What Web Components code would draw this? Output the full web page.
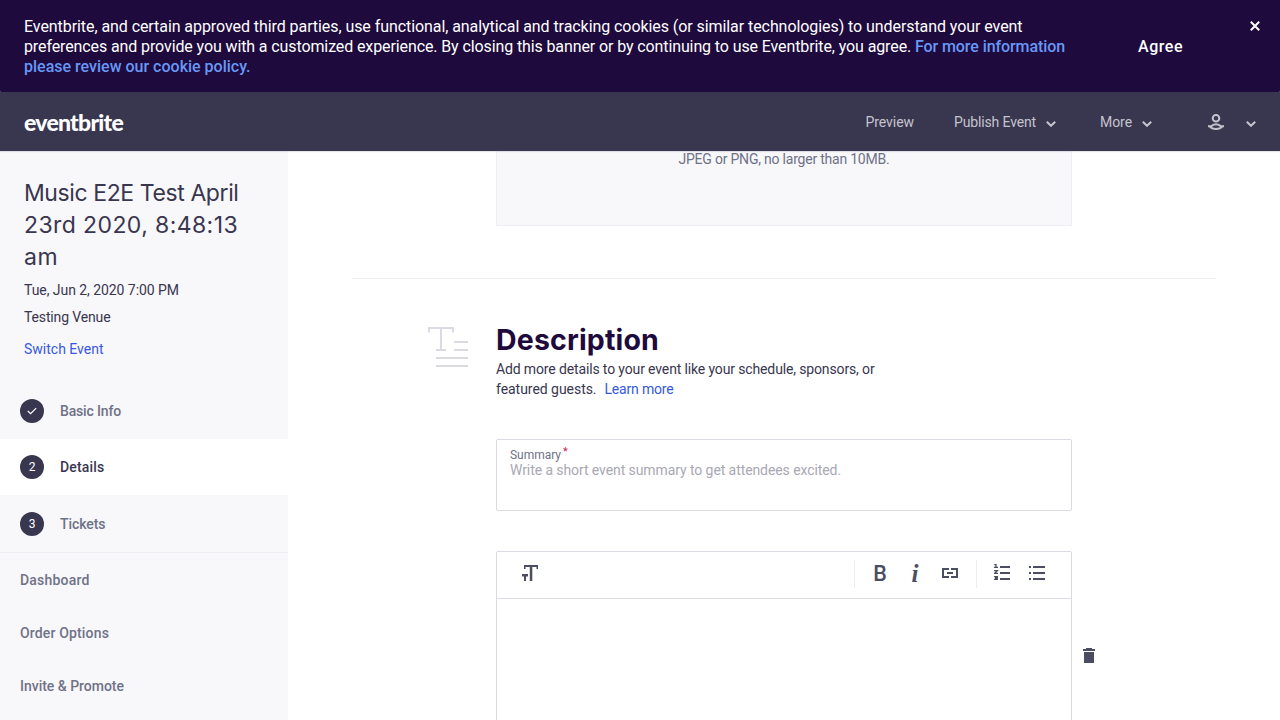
<!DOCTYPE html>
<html lang="en"><head><meta charset="utf-8"><title>Music E2E Test April – Details</title>
<style>
body{margin:0;font-family:Roboto,"Liberation Sans",sans-serif;font-size:14px;color:#39364f;background:#fff}
</style></head><body>
<event-page></event-page>
<script>
const make = (name, html) => customElements.define(name, class extends HTMLElement {
  connectedCallback() {
    if (this.shadowRoot) return;
    const t = document.createElement('template');
    t.innerHTML = html;
    this.attachShadow({mode: 'open'}).append(t.content.cloneNode(true));
  }
});

make('chevron-icon', `<style>:host{display:block;width:10px;height:6px}svg{display:block}</style>
<svg width="10" height="6" viewBox="0 0 10 6" fill="none" stroke="currentColor" stroke-width="2"><path d="M.8.8 5 4.8 9.2.8"/></svg>`);

make('cookie-banner', `<style>
:host{display:flex;box-sizing:border-box;height:92px;padding:17px 20px 0 24px;background:#1e0a3c;color:#fff;font-size:16px;line-height:20px;border-radius:0 0 1px 1px}
.copy{width:1046px}.row{display:block;height:20px;white-space:nowrap}
b{font-weight:500;color:#6898f7}
.agree{margin:20px 0 0 68px;font-weight:500;width:112px}
svg{display:block;margin-top:4px}
</style>
<div class="copy">
<span class="row"><fit-text w="998.5">Eventbrite, and certain approved third parties, use functional, analytical and tracking cookies (or similar technologies) to understand your event</fit-text></span>
<span class="row"><fit-text w="891">preferences and provide you with a customized experience. By closing this banner or by continuing to use Eventbrite, you agree. </fit-text><b><fit-text w="150">For more information</fit-text></b></span>
<span class="row"><b><fit-text w="226.5">please review our cookie policy.</fit-text></b></span>
</div>
<span class="agree"><fit-text w="45">Agree</fit-text></span>
<svg width="10" height="10" viewBox="0 0 10 10" stroke="#fff" stroke-width="2"><path d="M.8.8l8.4 8.4M9.2.8.8 9.2"/></svg>`);

make('top-nav', `<style>
:host{display:flex;align-items:center;height:59px;box-sizing:border-box;padding:0 24px;background:#39364f;color:#c5c4ce;line-height:20px;position:relative;z-index:1;box-shadow:0 1px 1px #39364f22}
.logo{font:900 23px/26px Lato,sans-serif;color:#fff;width:841.5px;margin-top:0}
chevron-icon{margin-top:4px}
.publish{margin:0 10px 0 40px}.more{margin:0 10px 0 44px}.user{margin:0 22px 0 56px}
</style>
<div class="logo"><fit-text w="99">eventbrite</fit-text></div>
<fit-text w="48.5">Preview</fit-text>
<fit-text class="publish" w="82">Publish Event</fit-text><chevron-icon></chevron-icon>
<fit-text class="more" w="32">More</fit-text><chevron-icon></chevron-icon>
<svg class="user" width="16" height="16" viewBox="0 0 16 16" fill="none" stroke="currentColor" stroke-width="2"><circle cx="8" cy="4.300" r="3.300"/><path d="M0 12.200h3.200M12.800 12.200H16M1.600 12.400C3 14 5 15 8 15s5-1 6.400-2.600M3 12.400C4.200 11 6 10.200 8 10.200s3.800.8 5 2.200"/></svg>
<chevron-icon></chevron-icon>`);

make('step-item', `<style>
:host{display:flex;align-items:center;height:56px;padding-left:20px;color:#6f7287;font-weight:500}
:host([active]){background:#fff;color:#39364f}
.dot{width:24px;height:24px;border-radius:50%;background:#39364f;color:#fff;font-size:12px;font-weight:400;display:flex;align-items:center;justify-content:center;margin-right:16px}
</style><span class="dot"><slot name="mark"></slot></span><slot></slot>`);

make('side-bar', `<style>
:host{display:block;width:288px;height:569px;background:#f8f7fa;overflow:hidden;flex:none}
header{padding:26px 24px 0;height:206px}
h1{margin:0;font:400 23px/32px Inter,Roboto,sans-serif}
h1 span{display:block;height:32px}
p{margin:0;line-height:20px;height:20px}
.date{margin-top:7px}.venue{margin-top:7px}.switch{margin-top:12px;color:#3659e3}
nav{border-top:1px solid #eeedf2;font-weight:500;color:#6f7287}
nav div{height:53px;line-height:55px;padding-left:20px}
.last{height:57px}
</style>
<header><h1><span><fit-text w="214.5">Music E2E Test April</fit-text></span><span><fit-text w="214">23rd 2020, 8:48:13</fit-text></span><span><fit-text w="34">am</fit-text></span></h1>
<p class="date"><fit-text w="155">Tue, Jun 2, 2020 7:00 PM</fit-text></p>
<p class="venue"><fit-text w="86.5">Testing Venue</fit-text></p>
<p class="switch"><fit-text w="79.5">Switch Event</fit-text></p></header>
<step-item><svg slot="mark" width="10" height="8" viewBox="0 0 10 8" fill="none" stroke="#fff" stroke-width="1.2"><path d="M.8 4 3.6 6.7 9.2 1.1"/></svg><fit-text w="61">Basic Info</fit-text></step-item>
<step-item active><span slot="mark">2</span><fit-text w="44.5">Details</fit-text></step-item>
<step-item class="last"><span slot="mark">3</span><fit-text w="45.5">Tickets</fit-text></step-item>
<nav><div><fit-text w="69.5">Dashboard</fit-text></div><div><fit-text w="89">Order Options</fit-text></div><div><fit-text w="104">Invite &amp; Promote</fit-text></div></nav>`);

make('section-heading', `<style>
:host{display:flex;padding:48px 0 0 76px;height:112px}
svg{flex:none;margin-right:28px}
h2{margin:-3px 0 0;font:700 28.5px/32px Inter,Roboto,sans-serif;height:32px;color:#1e0a3c}
p{margin:3px 0 0;line-height:20px}p span{display:block;height:20px}a{color:#3659e3;margin-left:8px}
</style>
<svg width="40" height="40" viewBox="0 0 40 40" fill="#dbdae3"><path d="M0 0h26v5.500h-2V2H14v20h4v2H8v-2h4V2H2v3.500H0zM26 14h14v2H26zM26 22h14v2H26zM8 30h32v2H8zM8 38h32v2H8z"/></svg>
<div><h2><fit-text w="163">Description</fit-text></h2>
<p><span><fit-text w="378.5">Add more details to your event like your schedule, sponsors, or</fit-text></span><span><fit-text w="100.5">featured guests.</fit-text><a><fit-text w="69">Learn more</fit-text></a></span></p></div>`);

make('summary-field', `<style>
:host{display:block;box-sizing:border-box;width:576px;height:72px;border:1px solid #dbdae3;border-radius:2px;padding:7px 13px}
.label{font-size:12px;line-height:16px;height:14px;color:#6f7287;display:flex}
.star{color:#d01b4c;font-size:11px;line-height:10px;margin-left:2px}
.hint{line-height:20px;height:20px;margin-top:-1px;color:#a9a8b3}
</style><div class="label"><fit-text w="51">Summary</fit-text><span class="star">*</span></div>
<div class="hint"><fit-text w="331">Write a short event summary to get attendees excited.</fit-text></div>`);

make('editor-toolbar', `<style>
:host{display:flex;align-items:center;height:46px;border-bottom:1px solid #dbdae3;padding:0 26px 0 25px;color:#4b4d63}
svg{display:block;fill:currentColor;flex:none}
.gap{flex:1}.sep{width:1px;height:28px;background:#eeedf2;margin-top:-2px}
.b,.i{line-height:46px;height:48px;text-align:center}
.b{font-size:21.500px;font-weight:500;width:14px;margin-left:18px}
.i{font:italic 700 25px/46px "Liberation Serif",serif;width:12px;margin-left:22px}
.link{margin:-4px 18px 0 21px}.num{margin:-6px 19px 0 17px}.bul{margin-top:-4px}
.tt{margin-top:-4px}
</style>
<svg class="tt" width="16" height="16" viewBox="0 0 16 16"><path d="M2 0h14v4h-1.500V2H10.300v14H7.800V2H3.500v2H2zM0 9h6v2.500H4V16H2v-4.500H0z"/></svg>
<span class="gap"></span><span class="sep"></span>
<span class="b">B</span><span class="i">i</span>
<svg class="link" width="16" height="10" viewBox="0 0 16 10"><path d="M0 0h7v2H2v6h5v2H0zM9 0h7v10H9V8h5V2H9zM5 4h6v2H5z"/></svg>
<span class="sep"></span>
<svg class="num" width="16" height="18" viewBox="0 0 16 18"><path d="M6 3h10v2H6zM6 9h10v2H6zM6 15h10v2H6z"/><path fill="none" stroke="currentColor" stroke-width="1.300" d="M.3 1.700H2V4.400M0 4.400h4M0 7.700h3.300L.7 10.300H4M0 13.700h3.300v2.600H0M1 15h2.300"/></svg>
<svg class="bul" width="16" height="14" viewBox="0 0 16 14"><path d="M0 0h2v2H0zM0 6h2v2H0zM0 12h2v2H0zM4 0h12v2H4zM4 6h12v2H4zM4 12h12v2H4z"/></svg>`);

make('text-editor', `<style>
:host{display:flex;align-items:flex-start}
.box{box-sizing:border-box;width:576px;height:220px;border:1px solid #dbdae3;border-radius:2px}
svg{display:block;margin:97px 0 0 11px}
</style><div class="box"><editor-toolbar></editor-toolbar></div>
<svg width="12" height="15" viewBox="0 0 12 15" fill="#4b4d63"><path d="M3 0h6v1h3v2H0V1h3zM1 4h10v11H1z"/></svg>`);

make('event-main', `<style>
:host{display:block;flex:1;height:569px;overflow:hidden;padding:0 64px;box-sizing:border-box}
.upload{box-sizing:border-box;width:576px;height:75px;margin-left:144px;background:#f8f7fa;border:1px solid #eeedf2;border-top:0;text-align:center;line-height:16px;color:#6f7287}
hr{margin:52px 0 0;border:0;height:1px;background:#eeedf2}
summary-field{margin-left:144px}text-editor{margin:40px 0 0 144px}
</style><div class="upload"><fit-text w="211">JPEG or PNG, no larger than 10MB.</fit-text></div><hr>
<section-heading></section-heading><summary-field></summary-field><text-editor></text-editor>`);

make('event-page', `<style>:host{display:block;height:720px;overflow:hidden}.body{display:flex}</style>
<cookie-banner></cookie-banner><top-nav></top-nav><div class="body"><side-bar></side-bar><event-main></event-main></div>`);

/* Tracks a single line of text so that it spans the width given in "w". */
customElements.define('fit-text', class extends HTMLElement {
  connectedCallback() {
    if (this.shadowRoot) return;
    this.attachShadow({mode: 'open'}).innerHTML = '<style>:host{display:inline-block;white-space:pre;flex:none}</style><slot></slot>';
    const w = parseFloat(this.getAttribute('w'));
    const natural = this.getBoundingClientRect().width;
    this.style.letterSpacing = ((w - natural) / this.textContent.length).toFixed(4) + 'px';
  }
});
</script></body></html>
